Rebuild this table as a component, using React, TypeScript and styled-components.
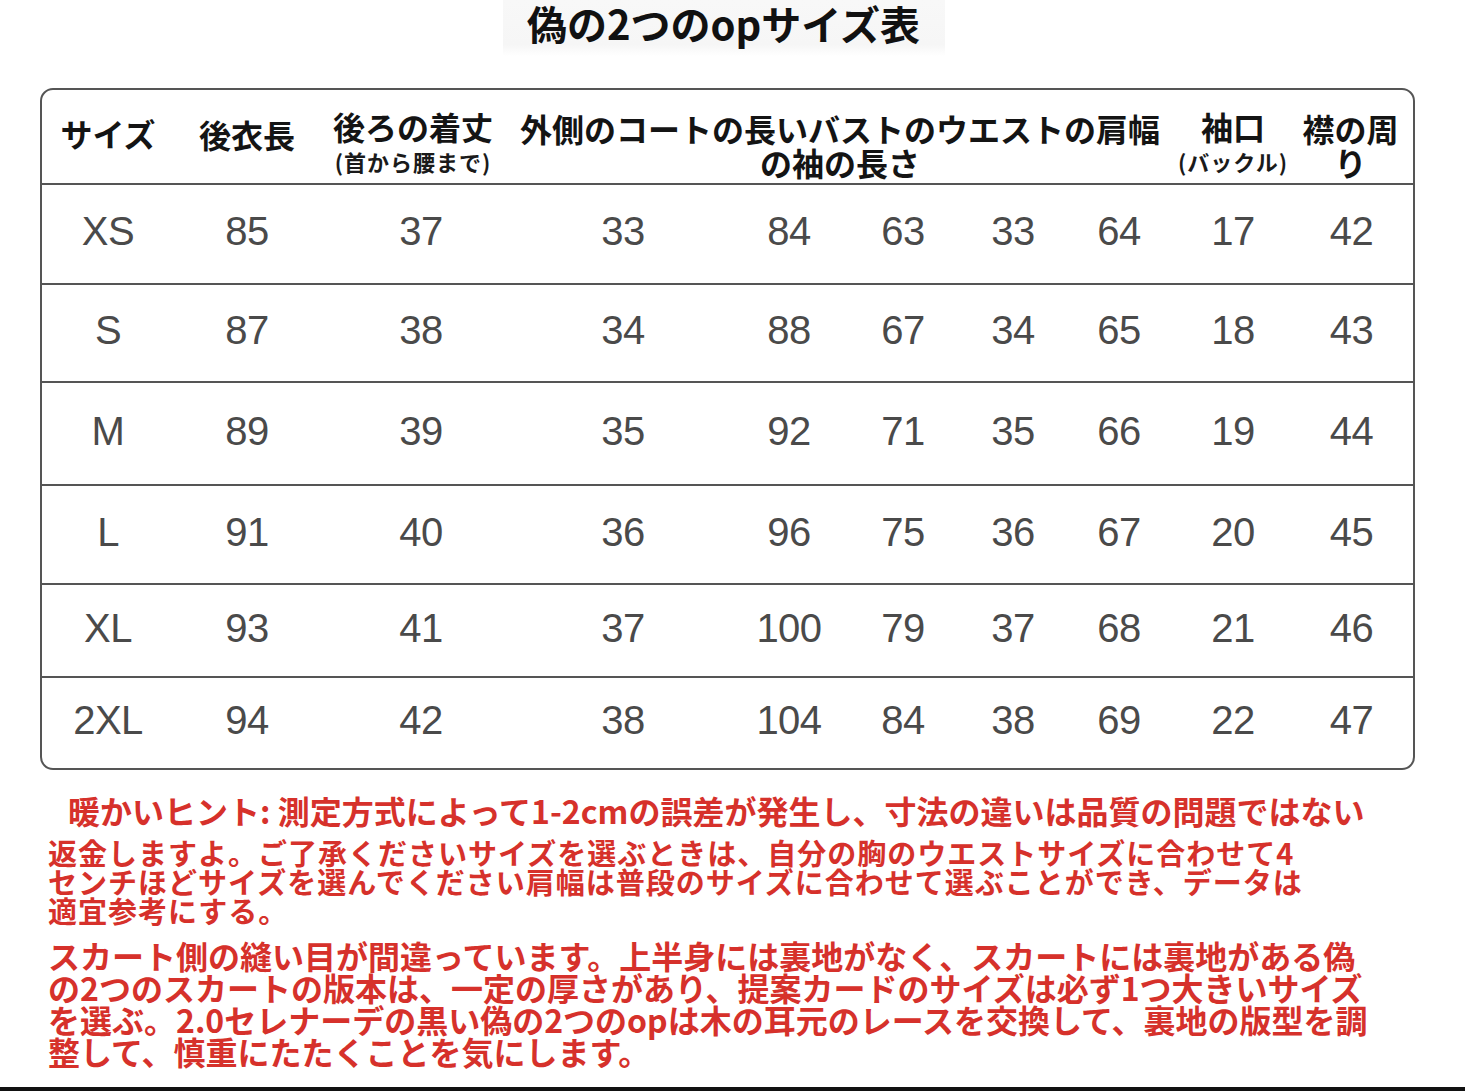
import styled, { createGlobalStyle } from "styled-components";

const GlobalStyle = createGlobalStyle`
  html, body {
    margin: 0;
    padding: 0;
    background: #ffffff;
  }
  body {
    font-family: "Noto Sans CJK JP", "Noto Sans", sans-serif;
    overflow: hidden;
  }
`;

const COLUMNS = "132px 146px 202px 202px 130px 98px 122px 90px 138px 1fr";

const rows = [
  { size: "XS", values: ["85", "37", "33", "84", "63", "33", "64", "17", "42"], height: 100 },
  { size: "S", values: ["87", "38", "34", "88", "67", "34", "65", "18", "43"], height: 98 },
  { size: "M", values: ["89", "39", "35", "92", "71", "35", "66", "19", "44"], height: 103 },
  { size: "L", values: ["91", "40", "36", "96", "75", "36", "67", "20", "45"], height: 99 },
  { size: "XL", values: ["93", "41", "37", "100", "79", "37", "68", "21", "46"], height: 93 },
  { size: "2XL", values: ["94", "42", "38", "104", "84", "38", "69", "22", "47"], height: 90 },
];

export default function App() {
  return (
    <Page>
      <GlobalStyle />
      <TitleBar>
        <Title>偽の2つのopサイズ表</Title>
      </TitleBar>

      <Table>
        <HeaderRow>
          <HeadCell $top={26}>
            <HeadLine>サイズ</HeadLine>
          </HeadCell>
          <HeadCell $top={27}>
            <HeadLine>後衣長</HeadLine>
          </HeadCell>
          <HeadCell $top={19} $shift={16}>
            <HeadLine>後ろの着丈</HeadLine>
            <SubLine>(首から腰まで)</SubLine>
          </HeadCell>
          <HeadCell $top={21} $span={5} $shift={6}>
            <HeadLine>外側のコートの長いバストのウエストの肩幅</HeadLine>
            <HeadLine>の袖の長さ</HeadLine>
          </HeadCell>
          <HeadCell $top={19}>
            <HeadLine>袖口</HeadLine>
            <SubLine>(バックル)</SubLine>
          </HeadCell>
          <HeadCell $top={21} $shift={14}>
            <HeadLine>襟の周</HeadLine>
            <HeadLine>り</HeadLine>
          </HeadCell>
        </HeaderRow>

        {rows.map((row, i) => (
          <DataRow key={row.size} $height={row.height} $last={i === rows.length - 1}>
            <DataCell>{row.size}</DataCell>
            {row.values.map((v, j) => (
              <DataCell key={j} $shift={j === row.values.length - 1 ? 12 : 0}>
                {v}
              </DataCell>
            ))}
          </DataRow>
        ))}
      </Table>

      <Notes>
        <NoteBlock>
          <LeadLine>暖かいヒント: 測定方式によって1-2cmの誤差が発生し、寸法の違いは品質の問題ではない</LeadLine>
          <NoteLine>返金しますよ。ご了承くださいサイズを選ぶときは、自分の胸のウエストサイズに合わせて4</NoteLine>
          <NoteLine>センチほどサイズを選んでください肩幅は普段のサイズに合わせて選ぶことができ、データは</NoteLine>
          <NoteLine>適宜参考にする。</NoteLine>
        </NoteBlock>
        <NoteBlock $gap={14}>
          <WideLine>スカート側の縫い目が間違っています。上半身には裏地がなく、スカートには裏地がある偽</WideLine>
          <WideLine>の2つのスカートの版本は、一定の厚さがあり、提案カードのサイズは必ず1つ大きいサイズ</WideLine>
          <WideLine>を選ぶ。2.0セレナーデの黒い偽の2つのopは木の耳元のレースを交換して、裏地の版型を調</WideLine>
          <WideLine>整して、慎重にたたくことを気にします。</WideLine>
        </NoteBlock>
      </Notes>

      <BottomEdge />
    </Page>
  );
}

const Page = styled.div`
  width: 1465px;
  height: 1091px;
  display: flex;
  flex-direction: column;
  background: #ffffff;
`;

const TitleBar = styled.div`
  display: flex;
  justify-content: center;
  padding-right: 18px;
  margin-bottom: 32px;
`;

const Title = styled.h1`
  margin: 0;
  width: 442px;
  height: 56px;
  box-sizing: border-box;
  padding-bottom: 13px;
  padding-top: 3px;
  text-align: center;
  font-family: "Noto Sans CJK JP", sans-serif;
  font-size: 40px;
  font-weight: 700;
  line-height: 40px;
  color: #111111;
  background: linear-gradient(to bottom, #f8f8f8 0%, #f6f6f6 80%, #ffffff 100%);
`;

const Table = styled.div`
  margin-left: 40px;
  width: 1375px;
  box-sizing: border-box;
  border: 2px solid #555555;
  border-radius: 13px;
  overflow: hidden;
`;

const HeaderRow = styled.div`
  display: grid;
  grid-template-columns: ${COLUMNS};
  height: 95px;
  box-sizing: border-box;
  border-bottom: 2px solid #555555;
`;

const HeadCell = styled.div<{ $top: number; $span?: number; $shift?: number }>`
  grid-column: span ${(p) => p.$span ?? 1};
  display: flex;
  flex-direction: column;
  align-items: center;
  padding-top: ${(p) => p.$top}px;
  padding-right: ${(p) => p.$shift ?? 0}px;
  white-space: nowrap;
`;

const HeadLine = styled.div`
  font-family: "Noto Sans CJK JP", sans-serif;
  font-size: 32px;
  font-weight: 700;
  line-height: 34px;
  color: #141414;
`;

const SubLine = styled.div`
  font-family: "Noto Sans CJK JP", sans-serif;
  font-size: 22px;
  font-weight: 700;
  letter-spacing: 1px;
  line-height: 36px;
  color: #1a1a1a;
`;

const DataRow = styled.div<{ $height: number; $last: boolean }>`
  display: grid;
  grid-template-columns: ${COLUMNS};
  align-items: center;
  height: ${(p) => p.$height}px;
  box-sizing: border-box;
  border-bottom: ${(p) => (p.$last ? "none" : "2px solid #555555")};
`;

const DataCell = styled.div<{ $shift?: number }>`
  text-align: center;
  padding-right: ${(p) => p.$shift ?? 0}px;
  padding-bottom: 5px;
  font-family: "Liberation Sans", Arial, sans-serif;
  font-size: 40px;
  font-weight: 400;
  letter-spacing: -0.5px;
  color: #4a4a4a;
`;

const Notes = styled.div`
  margin-top: 20px;
  padding-left: 48px;
  display: flex;
  flex-direction: column;
  color: #d6312b;
  font-family: "Noto Sans CJK JP", sans-serif;
  font-weight: 700;
  white-space: nowrap;
`;

const NoteBlock = styled.div<{ $gap?: number }>`
  display: flex;
  flex-direction: column;
  margin-top: ${(p) => p.$gap ?? 0}px;
`;

const LeadLine = styled.div`
  padding-left: 20px;
  font-size: 32px;
  line-height: 40px;
  margin-bottom: 8px;
`;

const NoteLine = styled.div`
  font-size: 29px;
  line-height: 29px;
  letter-spacing: 1px;
`;

const WideLine = styled.div`
  font-size: 32px;
  line-height: 32px;
`;

const BottomEdge = styled.div`
  margin-top: auto;
  height: 4px;
  background: #111111;
`;
